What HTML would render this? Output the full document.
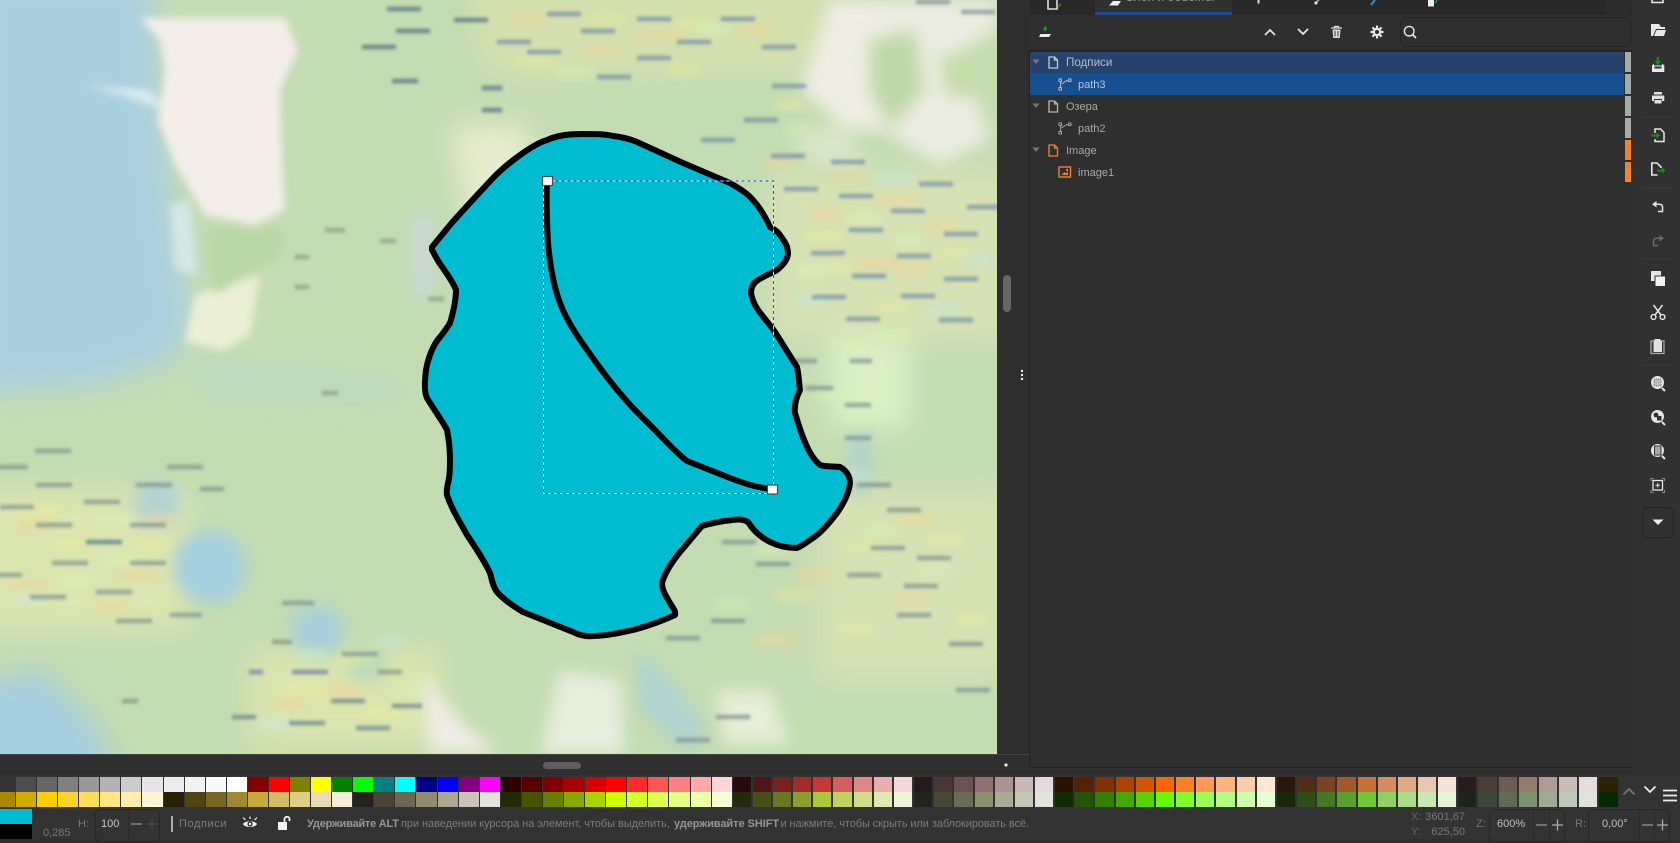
<!DOCTYPE html>
<html><head><meta charset="utf-8"><title>Inkscape</title>
<style>
html,body{margin:0;padding:0;background:#2f2f2f;}
body{width:1680px;height:839px;overflow:hidden;position:relative;font-family:"Liberation Sans","Noto Sans CJK SC",sans-serif;font-size:12px;color:#bbb;}
.a{position:absolute;white-space:nowrap;}
svg{position:absolute;overflow:visible;display:block;}
.r{position:absolute;left:0;display:flex;height:15px;}
.r i{display:block;flex:0 0 auto;height:100%;width:18.17px;margin-right:2px;}
.r i:first-child{width:15px;margin-right:1px;}
.r i:nth-child(n+2):nth-child(-n+35){width:20.08px;margin-right:1px;}
.row{position:absolute;left:1030px;width:594px;height:21px;}
.tag{position:absolute;left:1625px;width:6px;height:20px;}
.t{position:absolute;line-height:14px;white-space:nowrap;font-size:11px;}
.st{position:absolute;font-size:11px;line-height:14px;white-space:nowrap;color:#8a8a8a;}
.box{position:absolute;top:809px;height:34px;border:1px solid #262626;border-radius:5px;box-sizing:border-box;}
</style></head><body>

<!-- canvas map -->
<svg style="left:0;top:0" width="997" height="754" viewBox="0 0 997 754">
<defs>
<clipPath id="c"><rect width="997" height="754"/></clipPath>
<filter id="b14" x="-30%" y="-30%" width="160%" height="160%"><feGaussianBlur stdDeviation="14"/></filter>
<filter id="b8" x="-30%" y="-30%" width="160%" height="160%"><feGaussianBlur stdDeviation="8"/></filter>
<filter id="b4" x="-30%" y="-30%" width="160%" height="160%"><feGaussianBlur stdDeviation="4"/></filter>
<filter id="h" x="-5%" y="-5%" width="110%" height="110%"><feGaussianBlur stdDeviation="4.5"/></filter>
<filter id="b2" x="-5%" y="-5%" width="110%" height="110%"><feGaussianBlur stdDeviation="1.5"/></filter>
</defs>
<g clip-path="url(#c)">
<rect width="997" height="754" fill="#c4dcb2"/>
<g filter="url(#b14)">
<path d="M-30-30H150L165 150 180 260 190 320 175 360 100 385 -30 395Z" fill="#aad0e0"/>
<path d="M190 362L330 372 410 385 400 402 300 398 200 395Z" fill="#b8d8c8" opacity=".8"/>
<path d="M-30 690L40 670 90 720 120 780H-30Z" fill="#a5cde0"/>
<path d="M470 -20H850L840 20 820 70 520 80 480 60Z" fill="#d3e0ae"/>
<path d="M770 170H1010V340H770Z" fill="#d6e2b4"/>
<path d="M820 490H1010V680H820Z" fill="#d5e2b4"/>
<path d="M-20 490H190V630H-20Z" fill="#dbe5b0"/>
<path d="M250 650H440V745H250Z" fill="#dbe5ae"/>
<path d="M830 340H910V430H830Z" fill="#dcf0c4"/>
<path d="M450 125H530V230H470Z" fill="#e8ecce"/>
</g>
<g filter="url(#b4)">
<path d="M140 18H285L298 50 280 90 282 165 285 210 255 225 205 215 175 165 158 120 165 70 160 40Z" fill="#f3eee8"/>
<path d="M195 295L260 275 250 335 225 350 185 342Z" fill="#ebefd6"/>
<path d="M205 228L285 228 280 258 215 295Z" fill="#bad8a6"/>
<path d="M170 205L190 200 198 275 175 270Z" fill="#d3e7e4"/>
<path d="M85 85L150 90 165 110 120 95Z" fill="#d8ebee"/>
</g>
<g filter="url(#b8)">
<circle cx="210" cy="567" r="36" fill="#a6cfe0"/>
<circle cx="318" cy="632" r="26" fill="#a8cfdc"/>
<path d="M350 650H385V680H350Z" fill="#b5d8bc"/>
<circle cx="157" cy="503" r="24" fill="#a9cfdc" opacity=".75"/>
<path d="M830 0H890L880 60 900 130 850 130 800 90Z" fill="#eeede2"/>
<path d="M880 0H997V30L960 50 990 140 940 165 880 130 850 60Z" fill="#ebece0"/>
<path d="M870 40L915 30 925 90 890 130 870 90Z" fill="#bfd8a8"/>
<path d="M940 55L985 50 985 100 945 95Z" fill="#c6dcaa"/>
<path d="M852 430H870L868 495 852 495Z" fill="#a9cfd8" opacity=".75"/>
<path d="M635 650L665 675 705 725 690 754 640 710Z" fill="#abd1d8" opacity=".8"/>
<path d="M560 670L620 680 625 754 540 754Z" fill="#e6eedd"/>
<path d="M715 690H770L790 745H725Z" fill="#e5eed6"/>
<path d="M410 215H435V300H412Z" fill="#cbd7d8" opacity=".8"/>
<path d="M420 670L460 720 500 754 430 754Z" fill="#efece4"/>
<path d="M790 140L840 120 870 170 810 165Z" fill="#e3ecd6" opacity=".6"/>
</g>
<!-- coloured halos around label dashes -->
<g filter="url(#h)" fill="none" stroke-width="11" stroke-linecap="round" opacity=".55">
<path stroke="#f2d49a" d="M515 20h30M640 36h40M590 50h26M745 30h22M880 200h34M815 214h30M930 226h24M860 262h40M905 268h24M770 162h20M840 175h20M20 525h30M150 520h20M10 585h34M120 575h34M100 605h22M320 690h36M280 705h20M900 520h30M800 575h30M900 600h24M760 640h30"/>
<path stroke="#e6ea9c" d="M590 20h30M680 24h30M520 62h30M670 70h26M780 105h20M810 238h30M940 255h24M880 305h24M830 268h20M60 545h30M140 545h26M30 510h24M340 660h30M290 690h34M370 712h30M930 540h30M850 545h30M960 620h24M780 595h30M840 630h30"/>
<path stroke="#d6f2b6" d="M700 30h26M560 72h28M790 130h20M850 218h26M900 240h20M800 270h24M880 335h24M830 345h30M820 395h30M850 420h20M100 520h30M60 580h30M110 560h24M300 655h24M400 690h20M870 530h24M920 570h26M760 550h20M720 605h24"/>
<path stroke="#c4e8dc" d="M880 178h30M800 300h24M930 310h24M970 260h20M845 475h20M20 600h20M260 725h30M380 640h20"/>
</g>
<g filter="url(#b2)" fill="none" stroke-width="4.6" stroke-linecap="butt" opacity=".72">
<path stroke="#6f8aa8" d="M547 14h34M637 19h34M721 19h34M581 31h34M497 42h34M677 42h34M527 52h34M637 58h34M762 47h34M597 77h34M772 86h34M744 120h34M701 140h34M771 156h34M831 162h34M784 189h34M839 196h34M891 211h34M849 230h34M811 253h34M944 234h34M919 184h34M967 207h34M897 256h34M852 276h34M812 297h34M846 319h34M901 296h34M944 279h34M939 320h34"/>
<path stroke="#7a8e90" d="M795 361h22M850 361h22M805 388h28M845 405h26M845 438h26M722 542h34M756 564h34M847 575h34M871 548h34M904 586h34M897 615h34M711 621h34M666 638h34M949 644h34M956 690h34M676 740h34M716 717h34M887 510h34M917 558h34M857 485h34M961 12h34M916 2h34"/>
<path stroke="#4f6a86" d="M387 9h34M454 20h34M396 31h34M362 47h34M392 81h26M482 88h20M482 110h20"/>
<path stroke="#8b9a80" d="M325 230h20M380 241h16M295 257h14M295 287h14M428 299h16M322 393h16"/>
<path stroke="#7d9190" d="M35 451h36M-4 467h32M167 467h36M36 485h36M136 485h36M200 489h24M84 502h36M0 507h34M36 525h36M130 525h36M52 563h36M130 563h36M-4 575h26M96 592h36M30 597h36M116 621h36M170 615h32M282 603h32M342 654h36"/>
<path stroke="#45788e" d="M86 542h36"/>
<path stroke="#6a76a4" d="M292 672h36M249 672h14"/>
<path stroke="#80907a" d="M378 672h24M122 701h16M272 642h20"/>
<path stroke="#63808f" d="M331 701h34M392 706h30M232 717h24M289 723h36M356 728h34"/>
</g>
<!-- lake -->
<path d="M432 247L450 225C465 208 480 192 493 178C505 166 513 160 523 153C533 146 540 142 547 140C558 135 570 134 583 134C595 134 605 134 613 136C622 137 630 139 637 142L683 163L730 183C742 190 748 194 753 200C761 209 766 218 770 227C776 230 779 233 782 238C786 243 788 248 788 253C788 260 782 266 777 270C770 274 764 276 758 280C753 283 751 288 751 293C752 299 754 304 758 310C764 318 770 325 775 332L797 367C799 376 799 383 800 390C796 398 794 405 795 413C798 423 801 433 805 442C809 452 814 460 820 465C826 467 833 466 840 467C846 470 850 476 850 483C849 493 844 503 837 513C830 522 822 532 813 538C807 542 802 546 797 548C787 548 778 546 770 542C760 537 753 530 748 522C743 519 738 519 733 520C722 521 712 523 702 526C695 534 688 543 680 552C672 562 665 572 662 583C662 590 666 596 670 603C673 608 676 611 675 615C662 621 648 626 633 630C619 633 606 636 593 636C585 637 579 635 573 632L523 612C513 606 504 600 497 592C493 587 492 580 490 573C484 560 475 547 467 535C460 522 452 510 447 495C446 490 448 484 449 478C450 472 450 466 450 460C450 450 449 440 447 430C442 420 434 410 427 398C425 394 424 386 426 370C428 358 433 345 440 337C444 332 447 328 450 323C453 313 456 302 456 290C453 282 448 276 443 268C438 262 435 255 432 250Z" fill="#00bcd1" stroke="#000" stroke-width="6" stroke-linejoin="round"/>
<path d="M547 181C546 205 547 225 548 243C550 265 553 285 560 303C568 325 585 347 600 368C617 391 634 410 650 425C663 438 675 452 687 461L730 478C745 484 758 488 772 489" fill="none" stroke="#000" stroke-width="6"/>
<!-- selection bbox -->
<rect x="543.5" y="181" width="230" height="312.5" fill="none" stroke="#d8f0ff" stroke-width="1"/>
<rect x="543.5" y="181" width="230" height="312.5" fill="none" stroke="#2050c0" stroke-width="1" stroke-dasharray="3 3"/>
<rect x="542.5" y="176.5" width="10" height="9" fill="#fff" stroke="#4a4a4a" stroke-width="1.2"/>
<rect x="767.5" y="485" width="10" height="9" fill="#fff" stroke="#4a4a4a" stroke-width="1.2"/>
</g>
</svg>

<!-- right panel backgrounds -->
<div class="a" style="left:997px;top:0;width:33px;height:775px;background:#2e2e2e"></div>
<div class="a" style="left:0;top:754px;width:1030px;height:21px;background:#2f2f2f;border-top:1px solid #444;box-sizing:border-box"></div>
<div class="a" style="left:1030px;top:0;width:602px;height:15px;background:#282828"></div>
<div class="a" style="left:1030px;top:15px;width:602px;height:35px;background:#2f2f2f"></div>
<div class="a" style="left:1029px;top:50px;width:604px;height:718px;background:#2f2f2f;border:1px solid #232323;border-top:2px solid #232323;box-sizing:border-box"></div>
<div class="a" style="left:1632px;top:0;width:48px;height:775px;background:#313131"></div>

<!-- scrollbars & dots -->
<div class="a" style="left:1003px;top:275px;width:8px;height:37px;background:#666;border-radius:4px"></div>
<div class="a" style="left:543px;top:762px;width:38px;height:7px;background:#5e5e5e;border-radius:4px"></div>
<svg style="left:1019px;top:369px" width="6" height="14"><circle cx="3" cy="2" r="1.2" fill="#eee"/><circle cx="3" cy="6" r="1.2" fill="#eee"/><circle cx="3" cy="10" r="1.2" fill="#eee"/></svg>
<svg style="left:1003px;top:762px" width="6" height="6"><circle cx="3" cy="3" r="1.6" fill="#eee"/></svg>

<!-- tabs -->
<div class="a" style="left:1095px;top:0;width:137px;height:15px;background:#303030"></div>
<div class="a" style="left:1095px;top:12px;width:137px;height:3px;background:#164d94"></div>
<div class="t" style="left:1125px;top:-10px;color:#999;font-size:12px">Слои и объекты</div>
<div class="t" style="left:1211px;top:-10px;color:#aaa;font-size:12px">✕</div>
<svg style="left:1046px;top:0" width="16" height="13" fill="none" stroke="#ddd" stroke-width="1.6"><path d="M2 0V9H11V0"/><path d="M12 7l3-3" stroke="#2a8a2a"/></svg>
<svg style="left:1108px;top:0" width="14" height="6"><path d="M1 5.5L5 1H13L10 5.5Z" fill="#eee"/></svg>
<svg style="left:1256px;top:0" width="6" height="4"><rect x="1.5" width="2" height="3.5" fill="#ddd"/></svg>
<svg style="left:1313px;top:0" width="8" height="6"><circle cx="3" cy="3" r="1.6" fill="#ddd"/><path d="M3 2L6 0" stroke="#ddd"/></svg>
<svg style="left:1370px;top:0" width="8" height="6"><path d="M1 5L5 0" stroke="#2f8fd8" stroke-width="2"/></svg>
<svg style="left:1428px;top:0" width="12" height="7"><rect width="6" height="6.5" fill="#eee"/><path d="M7 3L9 0" stroke="#2a9a2a" stroke-width="1.5"/></svg>
<div class="a" style="left:1605px;top:0;width:26px;height:15px;background:#2c2c2c;border-radius:0 0 5px 5px"></div>
<div class="t" style="left:1614px;top:-11px;color:#888">·</div>

<!-- layers toolbar -->
<svg style="left:1038px;top:25px" width="15" height="14"><path d="M5.5 3.5H9M7.2 1.5V6" stroke="#18a018" stroke-width="2" fill="none"/><path d="M2.5 9H13L11 12H1Z" fill="#eee"/></svg>
<svg style="left:1263px;top:27px" width="14" height="10"><path d="M2 8L7 3 12 8" fill="none" stroke="#e4e4e4" stroke-width="1.8"/></svg>
<svg style="left:1296px;top:27px" width="14" height="10"><path d="M2 2L7 7 12 2" fill="none" stroke="#e4e4e4" stroke-width="1.8"/></svg>
<svg style="left:1330px;top:25px" width="13" height="14"><path d="M1 3H12M4.5 3V1.5H8.5V3" fill="none" stroke="#ddd" stroke-width="1.3"/><path d="M2.5 4.5H10.5L9.8 13H3.2Z" fill="#ddd"/><path d="M5 6V11.5M8 6V11.5" stroke="#333" stroke-width="1"/></svg>
<svg style="left:1370px;top:25px" width="14" height="14"><g stroke="#e6e6e6" stroke-width="2.2"><path d="M7 0.5V13.5M0.5 7H13.5M2.4 2.4L11.6 11.6M11.6 2.4L2.4 11.6"/></g><circle cx="7" cy="7" r="4.2" fill="#e6e6e6"/><circle cx="7" cy="7" r="2" fill="#2f2f2f"/></svg>
<div class="a" style="left:1400px;top:17px;width:231px;height:30px;border:1px solid #242424;border-radius:5px;box-sizing:border-box"></div>
<svg style="left:1403px;top:25px" width="15" height="15"><circle cx="6.2" cy="6.2" r="4.8" fill="none" stroke="#e6e6e6" stroke-width="1.4"/><path d="M9.8 9.8L13 13" stroke="#e6e6e6" stroke-width="1.8"/></svg>

<!-- tree rows -->
<div class="row" style="top:52px;background:#26436c"></div>
<div class="row" style="top:73px;height:22px;background:#174f93"></div>
<div class="tag" style="top:52px;background:#a9a9a5"></div>
<div class="tag" style="top:74px;background:#a9a9a5"></div>
<div class="tag" style="top:96px;background:#a9a9a5"></div>
<div class="tag" style="top:118px;background:#a9a9a5"></div>
<div class="tag" style="top:140px;background:#f5812e"></div>
<div class="tag" style="top:162px;background:#f5812e"></div>

<svg style="left:1032px;top:59px" width="8" height="6"><path d="M0.5 0.5H7.5L4 5Z" fill="#787878"/></svg>
<svg style="left:1032px;top:103px" width="8" height="6"><path d="M0.5 0.5H7.5L4 5Z" fill="#787878"/></svg>
<svg style="left:1032px;top:147px" width="8" height="6"><path d="M0.5 0.5H7.5L4 5Z" fill="#787878"/></svg>

<svg style="left:1048px;top:56px" width="11" height="13" fill="none" stroke="#c8c8c8" stroke-width="1.3"><path d="M1 1H6.5L9.5 4V12H1Z"/><path d="M6.5 1V4H9.5"/></svg>
<svg style="left:1048px;top:100px" width="11" height="13" fill="none" stroke="#b8b8b8" stroke-width="1.3"><path d="M1 1H6.5L9.5 4V12H1Z"/><path d="M6.5 1V4H9.5"/></svg>
<svg style="left:1048px;top:144px" width="11" height="13" fill="none" stroke="#f5812e" stroke-width="1.3"><path d="M1 1H6.5L9.5 4V12H1Z"/><path d="M6.5 1V4H9.5"/></svg>

<svg style="left:1058px;top:78px" width="15" height="13" fill="none" stroke="#b4b8bc" stroke-width="1"><rect x="1" y="1" width="2.5" height="2.5"/><rect x="1" y="9.5" width="2.5" height="2.5"/><rect x="10.5" y="1" width="2.5" height="2.5"/><path d="M2.2 3.5C3 6 3 7 2.2 9.5M3.5 6C6 4 8 2.5 10.5 2.2"/></svg>
<svg style="left:1058px;top:122px" width="15" height="13" fill="none" stroke="#a0a0a0" stroke-width="1"><rect x="1" y="1" width="2.5" height="2.5"/><rect x="1" y="9.5" width="2.5" height="2.5"/><rect x="10.5" y="1" width="2.5" height="2.5"/><path d="M2.2 3.5C3 6 3 7 2.2 9.5M3.5 6C6 4 8 2.5 10.5 2.2"/></svg>
<svg style="left:1058px;top:166px" width="14" height="12"><rect x="1" y="1" width="11.5" height="10" fill="none" stroke="#f5812e" stroke-width="1.4"/><path d="M3.5 9L6.5 6 8 7.5 10 5.5V9Z" fill="#f5812e"/><rect x="8" y="3" width="2" height="2" fill="#f5812e"/></svg>

<div class="t" style="left:1066px;top:56px;color:#b8bec8;font-size:11.6px">Подписи</div>
<div class="t" style="left:1078px;top:78px;color:#b8c4d4">path3</div>
<div class="t" style="left:1066px;top:100px;color:#a8a8a8">Озера</div>
<div class="t" style="left:1078px;top:122px;color:#a8a8a8">path2</div>
<div class="t" style="left:1066px;top:144px;color:#a8a8a8">Image</div>
<div class="t" style="left:1078px;top:166px;color:#a8a8a8">image1</div>

<!-- right toolbar -->
<svg style="left:1644px;top:0" width="34" height="540" fill="none" stroke-linejoin="miter">
<!-- new -->
<path d="M8 0V2.5H19V0" stroke="#e6e6e6" stroke-width="1.6"/>
<!-- open -->
<path d="M7 24H15L17 27H21V29H12L9 36H7Z" fill="#e8e8e8"/><path d="M12.5 30H22L20 36H10Z" fill="#e8e8e8"/>
<!-- save -->
<path d="M8 65.5L10 63.5V65.5H18V63.5L20.3 65.5V72H8Z" fill="#e8e8e8"/><rect x="10.5" y="66.5" width="7" height="2" fill="#313131"/>
<path d="M13.8 57V63" stroke="#129012" stroke-width="2.2"/><path d="M10.5 61L13.8 65.5 17 61Z" fill="#129012"/>
<!-- print -->
<path d="M10 92H18V94.5H10Z" fill="#e0e0e0"/><path d="M8 95.5H20.3V101H18V99H10V101H8Z" fill="#e0e0e0"/><rect x="10.5" y="100" width="7" height="3.5" fill="#e0e0e0"/>
<!-- sep -->
<path d="M-2 117H30M-2 188H30M-2 259H30M-2 365H30" stroke="#3a3a3a"/>
<!-- import -->
<path d="M11 133V129H16.5L20 132.5V141.5H11V139" stroke="#e6e6e6" stroke-width="1.5"/><path d="M7.5 135.5H13" stroke="#129012" stroke-width="2"/><path d="M12.5 132.5L16 135.5 12.5 138.5Z" fill="#129012"/>
<!-- export -->
<path d="M13.5 175H7.8V163H13L17 167V168" stroke="#e6e6e6" stroke-width="1.6"/><path d="M13 170.5H18.5" stroke="#129012" stroke-width="2"/><path d="M18 167.5L21.5 170.5 18 173.5Z" fill="#129012"/>
<!-- undo -->
<path d="M14 211.5H18.5V207C18.5 205 17 204.2 15 204.2H11" stroke="#e4e4e4" stroke-width="1.5"/><path d="M12.5 201L8 204.2 12.5 207.5Z" fill="#e4e4e4"/>
<!-- redo -->
<path d="M14 245.5H9.5V241C9.5 239 11 238.2 13 238.2H17" stroke="#6a6a6a" stroke-width="1.5"/><path d="M15.5 235L20 238.2 15.5 241.5Z" fill="#6a6a6a"/>
<!-- copy -->
<rect x="7" y="271" width="10" height="10" fill="#e6e6e6"/><rect x="11" y="276" width="10.5" height="10.5" fill="#f2f2f2" stroke="#313131" stroke-width="1"/>
<!-- cut -->
<path d="M9.5 305L17 315M18.5 305L11 315" stroke="#e6e6e6" stroke-width="1.5"/><circle cx="9.5" cy="317" r="2.4" stroke="#e6e6e6" stroke-width="1.4"/><circle cx="18.5" cy="317" r="2.4" stroke="#e6e6e6" stroke-width="1.4"/>
<!-- paste -->
<rect x="7" y="341" width="13" height="12.5" stroke="#a8a8a8" stroke-width="1.3"/><rect x="9.5" y="341" width="8.5" height="11" fill="#e0e0e0"/><rect x="10.5" y="339" width="6" height="3" fill="#e0e0e0"/>
<!-- zoom sel -->
<circle cx="13.5" cy="382.5" r="6.5" fill="#e6e6e6"/><rect x="10" y="379" width="7" height="7" fill="#bbb" stroke="#777" stroke-dasharray="1 1"/><path d="M18 388L21 391" stroke="#e6e6e6" stroke-width="2"/>
<!-- zoom drawing -->
<circle cx="13.5" cy="416.5" r="6.5" fill="#e6e6e6"/><circle cx="12" cy="415" r="2.4" fill="#313131"/><rect x="13" y="416" width="4.5" height="4.5" fill="#313131"/><path d="M18 422L21 425" stroke="#e6e6e6" stroke-width="2"/>
<!-- zoom page -->
<circle cx="13.5" cy="450.5" r="6.5" fill="#e6e6e6"/><rect x="10.5" y="446" width="6.5" height="9" fill="#aaa" stroke="#313131"/><path d="M18 456L21 459" stroke="#e6e6e6" stroke-width="2"/>
<!-- zoom center -->
<path d="M7 481V478.5H9.5M18 478.5H20.5V481M20.5 490V492.5H18M9.5 492.5H7V490" stroke="#8a8a8a" stroke-width="1"/><rect x="9" y="480.5" width="9.5" height="9.5" stroke="#e6e6e6" stroke-width="1.3"/><path d="M11.5 485.2H16M13.7 483V487.5" stroke="#e6e6e6"/>
</svg>
<div class="a" style="left:1642px;top:507px;width:32px;height:31px;border:1px solid #242424;border-radius:5px;box-sizing:border-box"></div>
<svg style="left:1652px;top:519px" width="12" height="8"><path d="M0.5 0.5H11.5L6 6Z" fill="#eee"/></svg>

<!-- palette -->
<div class="a" style="left:0;top:775px;width:1680px;height:64px;background:#333"></div>
<div class="r" style="top:777px">
<i style="background:#333"></i><i style="background:#4d4d4d"></i><i style="background:#666"></i><i style="background:#808080"></i><i style="background:#999"></i><i style="background:#b3b3b3"></i><i style="background:#ccc"></i><i style="background:#e6e6e6"></i><i style="background:#ececec"></i><i style="background:#f2f2f2"></i><i style="background:#f9f9f9"></i><i style="background:#fff"></i><i style="background:#800000"></i><i style="background:#f00"></i><i style="background:#808000"></i><i style="background:#ff0"></i><i style="background:#008000"></i><i style="background:#0f0"></i><i style="background:#008080"></i><i style="background:#0ff"></i><i style="background:#000080"></i><i style="background:#00f"></i><i style="background:#800080"></i><i style="background:#f0f"></i><i style="background:#2b0000"></i><i style="background:#500"></i><i style="background:#800000"></i><i style="background:#a00"></i><i style="background:#d40000"></i><i style="background:#f00"></i><i style="background:#ff2a2a"></i><i style="background:#f55"></i><i style="background:#ff8080"></i><i style="background:#faa"></i><i style="background:#ffd5d5"></i><i style="background:#280b0b"></i><i style="background:#501616"></i><i style="background:#782121"></i><i style="background:#a02c2c"></i><i style="background:#c83737"></i><i style="background:#d35f5f"></i><i style="background:#de8787"></i><i style="background:#e9afaf"></i><i style="background:#f4d7d7"></i><i style="background:#241c1c"></i><i style="background:#483737"></i><i style="background:#6c5353"></i><i style="background:#916f6f"></i><i style="background:#ac9393"></i><i style="background:#c8b7b7"></i><i style="background:#e3dbdb"></i><i style="background:#2b1100"></i><i style="background:#520"></i><i style="background:#803300"></i><i style="background:#a40"></i><i style="background:#d45500"></i><i style="background:#f60"></i><i style="background:#ff7f2a"></i><i style="background:#f95"></i><i style="background:#ffb380"></i><i style="background:#fca"></i><i style="background:#ffe6d5"></i><i style="background:#28170b"></i><i style="background:#502d16"></i><i style="background:#784421"></i><i style="background:#a05a2c"></i><i style="background:#c87137"></i><i style="background:#d38d5f"></i><i style="background:#deaa87"></i><i style="background:#e9c6af"></i><i style="background:#f4e3d7"></i><i style="background:#241f1c"></i><i style="background:#483e37"></i><i style="background:#6c5d53"></i><i style="background:#917c6f"></i><i style="background:#ac9d93"></i><i style="background:#c8beb7"></i><i style="background:#e3dedb"></i><i style="background:#2b2200"></i>
</div>
<div class="r" style="top:792px">
<i style="background:#a80"></i><i style="background:#d4aa00"></i><i style="background:#fc0"></i><i style="background:#ffd42a"></i><i style="background:#fd5"></i><i style="background:#ffe680"></i><i style="background:#fea"></i><i style="background:#fff6d5"></i><i style="background:#28220b"></i><i style="background:#504416"></i><i style="background:#786721"></i><i style="background:#a0892c"></i><i style="background:#c8ab37"></i><i style="background:#d3bc5f"></i><i style="background:#decd87"></i><i style="background:#e9ddaf"></i><i style="background:#f4eed7"></i><i style="background:#24221c"></i><i style="background:#484537"></i><i style="background:#6c6753"></i><i style="background:#918a6f"></i><i style="background:#aca793"></i><i style="background:#c8c4b7"></i><i style="background:#e3e2db"></i><i style="background:#222b00"></i><i style="background:#450"></i><i style="background:#668000"></i><i style="background:#8a0"></i><i style="background:#aad400"></i><i style="background:#cf0"></i><i style="background:#d4ff2a"></i><i style="background:#df5"></i><i style="background:#e5ff80"></i><i style="background:#efa"></i><i style="background:#f6ffd5"></i><i style="background:#222b0b"></i><i style="background:#445016"></i><i style="background:#677821"></i><i style="background:#89a02c"></i><i style="background:#abc837"></i><i style="background:#bcd35f"></i><i style="background:#cdde87"></i><i style="background:#dde9af"></i><i style="background:#eef4d7"></i><i style="background:#22241c"></i><i style="background:#454837"></i><i style="background:#676c53"></i><i style="background:#8a916f"></i><i style="background:#a7ac93"></i><i style="background:#c4c8b7"></i><i style="background:#e2e3db"></i><i style="background:#112b00"></i><i style="background:#250"></i><i style="background:#338000"></i><i style="background:#4a0"></i><i style="background:#55d400"></i><i style="background:#6f0"></i><i style="background:#7fff2a"></i><i style="background:#9f5"></i><i style="background:#b3ff80"></i><i style="background:#cfa"></i><i style="background:#e5ffd5"></i><i style="background:#17280b"></i><i style="background:#2d5016"></i><i style="background:#447821"></i><i style="background:#5aa02c"></i><i style="background:#71c837"></i><i style="background:#8dd35f"></i><i style="background:#aade87"></i><i style="background:#c6e9af"></i><i style="background:#e3f4d7"></i><i style="background:#1c241c"></i><i style="background:#3e4837"></i><i style="background:#5d6c53"></i><i style="background:#7c916f"></i><i style="background:#9dac93"></i><i style="background:#bec8b7"></i><i style="background:#dee3db"></i><i style="background:#002b00"></i>
</div>
<svg style="left:1622px;top:787px" width="14" height="9"><path d="M1.5 7.5L7 2 12.5 7.5" fill="none" stroke="#777" stroke-width="1.8"/></svg>
<svg style="left:1643px;top:785px" width="14" height="9"><path d="M1.5 1.5L7 7 12.5 1.5" fill="none" stroke="#eee" stroke-width="1.8"/></svg>
<svg style="left:1663px;top:789px" width="14" height="13"><path d="M0 1.5H14M0 6.5H14M0 11.5H14" stroke="#eee" stroke-width="1.8"/></svg>

<!-- status bar -->
<div class="a" style="left:0;top:809px;width:32px;height:14.5px;background:#00bcd1"></div>
<div class="a" style="left:0;top:824px;width:32px;height:15px;background:#000"></div>
<div class="st" style="left:43px;top:826px;color:#777">0,285</div>
<div class="st" style="left:78px;top:817px;color:#777">H:</div>
<div class="box" style="left:95px;width:65px"></div>
<div class="a" style="left:128px;top:810px;width:1px;height:29px;background:#2a2a2a"></div>
<div class="st" style="left:101px;top:817px;color:#c8c8c8">100</div>
<svg style="left:130px;top:818px" width="30" height="12"><path d="M1 6H12" stroke="#888" stroke-width="1.5"/><path d="M17 6H27M22 1V11" stroke="#4a4a4a" stroke-width="1.3"/></svg>
<div class="a" style="left:171px;top:816px;width:2px;height:16px;background:#aaa"></div>
<div class="st" style="left:179px;top:817px;letter-spacing:.6px;color:#7f7f7f">Подписи</div>
<svg style="left:242px;top:816px" width="16" height="15"><path d="M1 1.5L3.5 4M15 1.5L12.5 4M8 0.5V3" stroke="#eee" stroke-width="1.2"/><path d="M1 8C3 4.5 13 4.5 15 8C13 12 3 12 1 8Z" fill="#eee"/><circle cx="8" cy="8" r="2.6" fill="#333"/><circle cx="8" cy="8" r="1.2" fill="#eee"/></svg>
<svg style="left:277px;top:815px" width="15" height="16"><rect x="1" y="7" width="9" height="8" fill="#f2f2f2"/><path d="M7.5 7V4C7.5 1 12.5 1 12.5 4V6" fill="none" stroke="#f2f2f2" stroke-width="1.8"/></svg>
<div class="st" style="left:307px;top:817px;font-weight:bold;color:#969696;letter-spacing:-.22px">Удерживайте ALT</div>
<div class="st" style="left:401px;top:817px;color:#7c7c7c;letter-spacing:-.06px">при наведении курсора на элемент, чтобы выделить,</div>
<div class="st" style="left:674px;top:817px;font-weight:bold;color:#969696;letter-spacing:-.05px">удерживайте SHIFT</div>
<div class="st" style="left:780.5px;top:817px;color:#7c7c7c;letter-spacing:-.08px">и нажмите, чтобы скрыть или заблокировать всё.</div>
<div class="st" style="left:1411px;top:810px;color:#666">X:</div>
<div class="st" style="left:1411px;top:825px;color:#666">Y:</div>
<div class="st" style="left:1420px;top:810px;width:45px;text-align:right;color:#777">3601,67</div>
<div class="st" style="left:1420px;top:825px;width:45px;text-align:right;color:#777">625,50</div>
<div class="st" style="left:1476px;top:817px;color:#777">Z:</div>
<div class="box" style="left:1489px;width:76px"></div>
<div class="st" style="left:1497px;top:817px;color:#c0c0c0">600%</div>
<div class="a" style="left:1533px;top:810px;width:1px;height:29px;background:#2a2a2a"></div>
<div class="a" style="left:1549px;top:810px;width:1px;height:29px;background:#2a2a2a"></div>
<svg style="left:1535px;top:818px" width="30" height="14"><path d="M1 7H12" stroke="#888" stroke-width="1.5"/><path d="M17 7H28M22.5 1.5V12.5" stroke="#aaa" stroke-width="1.3"/></svg>
<div class="st" style="left:1575px;top:817px;color:#777">R:</div>
<div class="box" style="left:1588px;width:82px"></div>
<div class="st" style="left:1602px;top:817px;color:#c0c0c0">0,00°</div>
<div class="a" style="left:1639px;top:810px;width:1px;height:29px;background:#2a2a2a"></div>
<div class="a" style="left:1654px;top:810px;width:1px;height:29px;background:#2a2a2a"></div>
<svg style="left:1641px;top:818px" width="30" height="14"><path d="M1 7H12" stroke="#888" stroke-width="1.5"/><path d="M16 7H27M21.5 1.5V12.5" stroke="#aaa" stroke-width="1.3"/></svg>
</body></html>
